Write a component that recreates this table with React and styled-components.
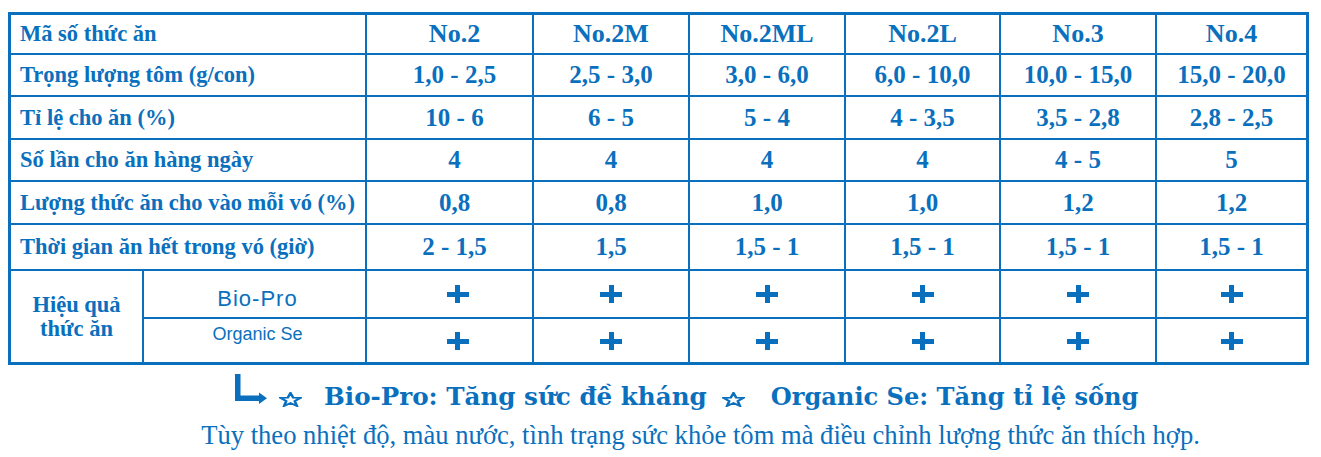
import styled, { createGlobalStyle } from "styled-components";

const BLUE = "#0a70bd";

const Global = createGlobalStyle`
  body {
    margin: 0;
    background: #fff;
    font-family: "Liberation Serif", serif;
    color: ${BLUE};
  }
`;

const Page = styled.div`
  width: 1321px;
  height: 457px;
  overflow: hidden;
`;

const Sheet = styled.div`
  display: grid;
  grid-template-columns: 131px 221px 165px 154px 154px 153px 154px 149px;
  grid-template-rows: 38px 40px 41px 40px 41px 44px 46px 43px;
  gap: 2px;
  padding: 3px;
  width: 1301px;
  box-sizing: border-box;
  margin: 12px 0 0 8px;
  background: ${BLUE};
`;

const Cell = styled.div`
  background: #fff;
  display: flex;
  align-items: center;
`;

const Label = styled(Cell)`
  grid-column: span 2;
  padding-left: 9px;
  font-size: 22.5px;
  font-weight: 700;
  white-space: nowrap;
`;

const Value = styled(Cell)`
  justify-content: center;
  padding-left: ${(p) => (p.$lead ? "10px" : "0")};
  font-size: ${(p) => (p.$head ? "26px" : "25px")};
  font-weight: 700;
  white-space: nowrap;
`;

const Group = styled(Cell)`
  grid-row: span 2;
  flex-direction: column;
  justify-content: center;
  font-size: 22.5px;
  font-weight: 700;
  line-height: 24px;
  text-align: center;
`;

const Sub = styled(Cell)`
  justify-content: center;
  padding-left: 6px;
  font-family: "Liberation Sans", Arial, sans-serif;
  font-size: ${(p) => (p.$top ? "22px" : "18px")};
  letter-spacing: ${(p) => (p.$top ? "1px" : "0")};
  line-height: 1;
  align-items: ${(p) => (p.$top ? "flex-end" : "flex-start")};
  padding-bottom: ${(p) => (p.$top ? "7px" : "0")};
  padding-top: ${(p) => (p.$top ? "0" : "6px")};
`;

const PlusCell = styled(Cell)`
  justify-content: center;
  padding-left: ${(p) => (p.$lead ? "16px" : "0")};
`;

const Plus = styled.span`
  position: relative;
  width: 22px;
  height: 18px;
  &::before,
  &::after {
    content: "";
    position: absolute;
    background: ${BLUE};
  }
  &::before {
    left: 0;
    right: 0;
    top: 7px;
    height: 5px;
  }
  &::after {
    top: 0;
    bottom: 0;
    left: 8.5px;
    width: 5px;
  }
`;

const Legend = styled.div`
  display: flex;
  align-items: flex-start;
  margin-top: 9px;
  padding-left: 235px;
`;

const Arrow = styled.svg`
  flex: none;
  margin-right: 12px;
`;

const Star = styled.svg`
  flex: none;
  margin-top: 18px;
  margin-right: ${(p) => p.$gap}px;
`;

const Note = styled.span`
  margin-top: 9px;
  margin-right: ${(p) => p.$gap || 0}px;
  font-family: "DejaVu Serif", serif;
  font-size: ${(p) => p.$size || 24.6}px;
  font-weight: 700;
  line-height: 28px;
  white-space: nowrap;
`;

const Advice = styled.div`
  margin-top: 9px;
  padding-left: 80px;
  text-align: center;
  font-size: 26.6px;
  line-height: 30px;
  white-space: nowrap;
`;

const codes = ["No.2", "No.2M", "No.2ML", "No.2L", "No.3", "No.4"];

const rows = [
  ["Trọng lượng tôm (g/con)", ["1,0 - 2,5", "2,5 - 3,0", "3,0 - 6,0", "6,0 - 10,0", "10,0 - 15,0", "15,0 - 20,0"]],
  ["Tỉ lệ cho ăn (%)", ["10 - 6", "6 - 5", "5 - 4", "4 - 3,5", "3,5 - 2,8", "2,8 - 2,5"]],
  ["Số lần cho ăn hàng ngày", ["4", "4", "4", "4", "4 - 5", "5"]],
  ["Lượng thức ăn cho vào mỗi vó (%)", ["0,8", "0,8", "1,0", "1,0", "1,2", "1,2"]],
  ["Thời gian ăn hết trong vó (giờ)", ["2 - 1,5", "1,5", "1,5 - 1", "1,5 - 1", "1,5 - 1", "1,5 - 1"]],
];

const StarIcon = ({ gap }) => (
  <Star $gap={gap} width="23" height="15" viewBox="0 0 24 23" preserveAspectRatio="none">
    <polygon
      points="12,1.5 14.8,8.6 22.5,8.9 16.5,13.8 18.6,21.3 12,17 5.4,21.3 7.5,13.8 1.5,8.9 9.2,8.6"
      fill="none"
      stroke={BLUE}
      strokeWidth="2.8"
      strokeLinejoin="miter"
    />
  </Star>
);

const App = () => {
  return (
    <Page>
      <Global />
      <Sheet>
        <Label>Mã số thức ăn</Label>
        {codes.map((c, i) => (
          <Value key={c} $head $lead={i === 0}>
            {c}
          </Value>
        ))}
        {rows.map(([name, vals]) => [
          <Label key={name}>{name}</Label>,
          ...vals.map((v, i) => (
            <Value key={name + i} $lead={i === 0}>
              {v}
            </Value>
          )),
        ])}
        <Group>
          <span>Hiệu quả</span>
          <span>thức ăn</span>
        </Group>
        <Sub $top>Bio-Pro</Sub>
        {codes.map((c, i) => (
          <PlusCell key={"b" + c} $lead={i === 0}>
            <Plus />
          </PlusCell>
        ))}
        <Sub>Organic Se</Sub>
        {codes.map((c, i) => (
          <PlusCell key={"o" + c} $lead={i === 0}>
            <Plus />
          </PlusCell>
        ))}
      </Sheet>
      <Legend>
        <Arrow width="32" height="30" viewBox="0 0 32 30">
          <rect x="0" y="0" width="5.5" height="27" fill={BLUE} />
          <rect x="0" y="21.5" width="25" height="5.5" fill={BLUE} />
          <polygon points="24,18.5 32,24.2 24,30" fill={BLUE} />
        </Arrow>
        <StarIcon gap={22} />
        <Note $gap={15}>Bio-Pro: Tăng sức đề kháng</Note>
        <StarIcon gap={26} />
        <Note $size={24.1}>Organic Se: Tăng tỉ lệ sống</Note>
      </Legend>
      <Advice>
        Tùy theo nhiệt độ, màu nước, tình trạng sức khỏe tôm mà điều chỉnh lượng thức ăn thích hợp.
      </Advice>
    </Page>
  );
};

export default App;
